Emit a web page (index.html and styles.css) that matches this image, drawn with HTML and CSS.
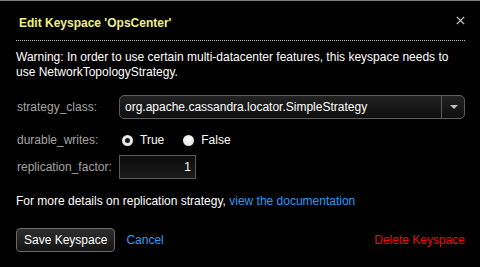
FILE: index.html
```
<!DOCTYPE html>
<html lang="en">
<head>
<meta charset="utf-8">
<title>Edit Keyspace</title>
<link rel="stylesheet" href="styles.css">
</head>
<body>
<div class="dialog">
  <div class="header">
    <h1 class="title">Edit Keyspace 'OpsCenter'</h1>
    <span class="close" aria-label="Close">
      <svg width="9" height="9" viewBox="0 0 9 9"><path d="M0.8 0.8 L8.2 8.2 M8.2 0.8 L0.8 8.2" stroke="#cfcfcf" stroke-width="1.2" fill="none"/></svg>
    </span>
  </div>
  <p class="warning">Warning: In order to use certain multi-datacenter features, this keyspace needs to use NetworkTopologyStrategy.</p>
  <div class="form">
    <div class="row row-strategy">
      <span class="label">strategy_class:</span>
      <div class="select">
        <span class="select-value">org.apache.cassandra.locator.SimpleStrategy</span>
        <span class="select-arrow"><svg width="8" height="4" viewBox="0 0 8 4"><path d="M0 0 H8 L4 4 Z" fill="#bdbdbd"/></svg></span>
      </div>
    </div>
    <div class="row row-durable">
      <span class="label">durable_writes:</span>
      <div class="radios">
        <span class="radio-option"><span class="radio radio-checked"></span><span class="radio-text">True</span></span>
        <span class="radio-option"><span class="radio"></span><span class="radio-text">False</span></span>
      </div>
    </div>
    <div class="row row-factor">
      <span class="label">replication_factor:</span>
      <div class="num-input">1</div>
    </div>
  </div>
  <p class="more">For more details on replication strategy, <a class="link" href="#">view the documentation</a></p>
  <div class="footer">
    <button class="btn">Save Keyspace</button>
    <a class="link cancel" href="#">Cancel</a>
    <a class="delete" href="#">Delete Keyspace</a>
  </div>
</div>
</body>
</html>
```
FILE: styles.css
```
html, body {
  margin: 0;
  padding: 0;
  background: #000;
}
body {
  font-family: "Liberation Sans", Arial, sans-serif;
  font-size: 12px;
  color: #fff;
}
.dialog {
  border-top: 1px solid #7a7a7a;
  padding: 0 15px 0 16px;
  height: 266px;
}
.header {
  display: flex;
  justify-content: space-between;
  align-items: flex-start;
  padding-top: 15px;
  padding-bottom: 9px;
  border-bottom: 1px dotted #bdbdbd;
}
.title {
  margin: 0;
  padding-left: 3px;
  font-size: 12px;
  line-height: 15px;
  font-weight: bold;
  color: #f0f08a;
}
.close {
  display: block;
  width: 9px;
  height: 9px;
}
.close svg {
  display: block;
}
.warning {
  margin: 9px 0 0;
  line-height: 15px;
  color: #fff;
}
.form {
  margin-top: 15px;
}
.row {
  display: flex;
  align-items: center;
}
.label {
  width: 103px;
  flex: none;
  color: #a4a4a4;
  line-height: 15px;
  padding-left: 1px;
  box-sizing: border-box;
}
.row-strategy {
  height: 24px;
}
.row-durable {
  height: 20px;
  margin-top: 11px;
}
.row-factor {
  height: 24px;
  margin-top: 5px;
}
.select {
  flex: 1;
  display: flex;
  height: 24px;
  box-sizing: border-box;
  border: 1px solid #5e5e5e;
  border-radius: 5px;
  background: linear-gradient(#222, #0e0e0e);
}
.select-value {
  flex: 1;
  padding-left: 5px;
  line-height: 22px;
  color: #fff;
}
.select-arrow {
  width: 23px;
  border-left: 1px solid #5a5a5a;
  display: flex;
  align-items: center;
  justify-content: center;
  padding-left: 2px;
  box-sizing: border-box;
}
.select-arrow svg {
  display: block;
}
.radios {
  display: flex;
  align-items: center;
  gap: 19px;
  padding-left: 3px;
}
.radio-option {
  display: flex;
  align-items: center;
  gap: 7px;
}
.radio {
  width: 11px;
  height: 11px;
  border-radius: 50%;
  box-sizing: border-box;
  background: radial-gradient(circle at 50% 35%, #fff, #d8d8d8);
}
.radio-checked {
  background: #1a1a1a;
  border: 3px solid #e8e8e8;
}
.radio-text {
  line-height: 15px;
  color: #fff;
}
.num-input {
  width: 77px;
  height: 24px;
  box-sizing: border-box;
  border: 1px solid #5a5a5a;
  background: linear-gradient(#0c0c0c, #1c1c1c);
  text-align: right;
  padding-right: 4px;
  line-height: 22px;
  color: #fff;
}
.more {
  margin: 15px 0 0;
  line-height: 15px;
}
.link {
  color: #2f9cf2;
  text-decoration: none;
}
.footer {
  display: flex;
  align-items: center;
  margin-top: 19px;
}
.btn {
  height: 24px;
  padding: 0 7px;
  box-sizing: border-box;
  border: 1px solid #6a6a6a;
  border-radius: 4px;
  background: linear-gradient(#2e2e2e, #141414);
  color: #fff;
  font-family: "Liberation Sans", Arial, sans-serif;
  font-size: 12px;
  line-height: 22px;
}
.cancel {
  margin-left: 11px;
}
.delete {
  margin-left: auto;
  color: #ee0a0a;
  text-decoration: none;
}
```
